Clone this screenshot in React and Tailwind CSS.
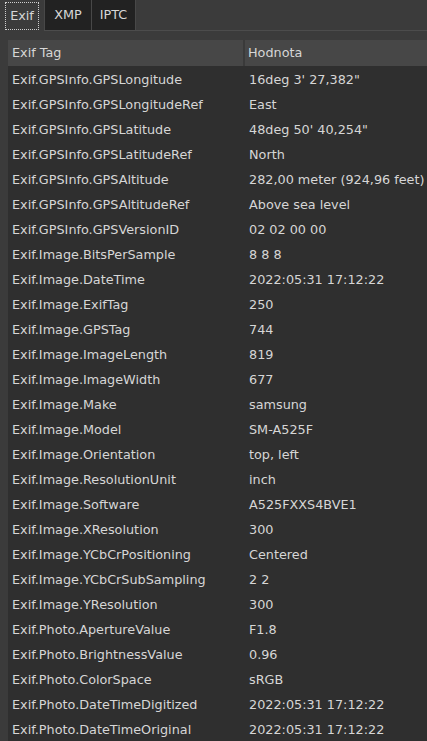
import React from 'react';

const rows = [
  ['Exif.GPSInfo.GPSLongitude', '16deg 3\' 27,382"'],
  ['Exif.GPSInfo.GPSLongitudeRef', 'East'],
  ['Exif.GPSInfo.GPSLatitude', '48deg 50\' 40,254"'],
  ['Exif.GPSInfo.GPSLatitudeRef', 'North'],
  ['Exif.GPSInfo.GPSAltitude', '282,00 meter (924,96 feet)'],
  ['Exif.GPSInfo.GPSAltitudeRef', 'Above sea level'],
  ['Exif.GPSInfo.GPSVersionID', '02 02 00 00'],
  ['Exif.Image.BitsPerSample', '8 8 8'],
  ['Exif.Image.DateTime', '2022:05:31 17:12:22'],
  ['Exif.Image.ExifTag', '250'],
  ['Exif.Image.GPSTag', '744'],
  ['Exif.Image.ImageLength', '819'],
  ['Exif.Image.ImageWidth', '677'],
  ['Exif.Image.Make', 'samsung'],
  ['Exif.Image.Model', 'SM-A525F'],
  ['Exif.Image.Orientation', 'top, left'],
  ['Exif.Image.ResolutionUnit', 'inch'],
  ['Exif.Image.Software', 'A525FXXS4BVE1'],
  ['Exif.Image.XResolution', '300'],
  ['Exif.Image.YCbCrPositioning', 'Centered'],
  ['Exif.Image.YCbCrSubSampling', '2 2'],
  ['Exif.Image.YResolution', '300'],
  ['Exif.Photo.ApertureValue', 'F1.8'],
  ['Exif.Photo.BrightnessValue', '0.96'],
  ['Exif.Photo.ColorSpace', 'sRGB'],
  ['Exif.Photo.DateTimeDigitized', '2022:05:31 17:12:22'],
  ['Exif.Photo.DateTimeOriginal', '2022:05:31 17:12:22'],
];

function App() {
  return (
    <div className="w-[427px] h-[741px] overflow-hidden bg-[#3b3b3b] text-[12.8px] text-[#d6d6d6] font-['DejaVu_Sans',sans-serif]">
      {/* tab bar */}
      <div className="flex h-[31px] border-b border-[#4c4c4c]">
        <div className="w-[44px] h-[31px] flex items-center justify-center bg-[#3b3b3b]">
          <span className="px-[4px] h-[28px] flex items-center border border-dotted border-[#cfcfcf]">Exif</span>
        </div>
        <div className="w-[47px] h-[30px] flex items-center justify-center bg-[#222222] border-l border-[#484848]">XMP</div>
        <div className="w-[45px] h-[30px] flex items-center justify-center bg-[#222222] border-l border-[#484848] border-r">IPTC</div>
      </div>

      {/* table */}
      <div className="ml-[8px] mt-[9px] bg-[#2f2f2f] h-[710px]">
        <div className="flex h-[26px] bg-[#474747] items-center">
          <div className="w-[237px] pl-[4px] border-r-2 border-[#3a3a3a] h-full flex items-center">Exif Tag</div>
          <div className="pl-[3px]">Hodnota</div>
        </div>
        <div className="pt-[1px]">
          {rows.map(([tag, val]) => (
            <div key={tag} className="flex h-[25px] items-center">
              <div className="w-[237px] pl-[4px] whitespace-nowrap overflow-hidden">{tag}</div>
              <div className="pl-[4px] whitespace-nowrap">{val}</div>
            </div>
          ))}
        </div>
      </div>
    </div>
  );
}

export default App;
